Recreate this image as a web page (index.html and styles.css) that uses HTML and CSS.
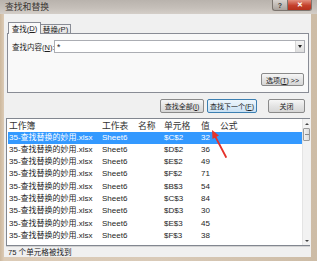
FILE: index.html
```html
<!DOCTYPE html>
<html lang="zh">
<head>
  <meta charset="UTF-8">
  <title>查找和替换</title>
  <link rel="stylesheet" href="styles.css">
</head>
<body>
  <div class="frame">
    <div class="titlebar">
      <span class="title">查找和替换</span>
      <div class="caption">
        <span class="cap-help">?</span>
        <span class="cap-close">✕</span>
      </div>
    </div>

    <div class="client">
      <div class="tabs">
        <div class="tab active">查找(<u>D</u>)</div>
        <div class="tab">替换(<u>P</u>)</div>
      </div>

      <div class="panel">
        <div class="find-row">
          <label>查找内容(<u>N</u>):</label>
          <div class="combo">
            <span class="combo-text">*</span>
            <span class="combo-drop"></span>
          </div>
        </div>
        <div class="options-row">
          <button class="btn btn-options">选项(<u>T</u>) &gt;&gt;</button>
        </div>
      </div>

      <div class="actions">
        <button class="btn btn-all">查找全部(<u>I</u>)</button>
        <button class="btn btn-next">查找下一个(<u>F</u>)</button>
        <button class="btn btn-close">关闭</button>
      </div>

      <div class="results">
        <div class="list">
          <div class="row head">
            <span>工作簿</span><span>工作表</span><span>名称</span><span>单元格</span><span>值</span><span>公式</span>
          </div>
          <div class="row selected"><span>35-查找替换的妙用.xlsx</span><span>Sheet6</span><span></span><span>$C$2</span><span>32</span><span></span></div>
          <div class="row"><span>35-查找替换的妙用.xlsx</span><span>Sheet6</span><span></span><span>$D$2</span><span>36</span><span></span></div>
          <div class="row"><span>35-查找替换的妙用.xlsx</span><span>Sheet6</span><span></span><span>$E$2</span><span>49</span><span></span></div>
          <div class="row"><span>35-查找替换的妙用.xlsx</span><span>Sheet6</span><span></span><span>$F$2</span><span>71</span><span></span></div>
          <div class="row"><span>35-查找替换的妙用.xlsx</span><span>Sheet6</span><span></span><span>$B$3</span><span>54</span><span></span></div>
          <div class="row"><span>35-查找替换的妙用.xlsx</span><span>Sheet6</span><span></span><span>$C$3</span><span>84</span><span></span></div>
          <div class="row"><span>35-查找替换的妙用.xlsx</span><span>Sheet6</span><span></span><span>$D$3</span><span>30</span><span></span></div>
          <div class="row"><span>35-查找替换的妙用.xlsx</span><span>Sheet6</span><span></span><span>$E$3</span><span>45</span><span></span></div>
          <div class="row"><span>35-查找替换的妙用.xlsx</span><span>Sheet6</span><span></span><span>$F$3</span><span>38</span><span></span></div>
        </div>
        <div class="scrollbar">
          <span class="sb-up"></span>
          <span class="sb-thumb"></span>
          <span class="sb-track"></span>
          <span class="sb-down"></span>
        </div>
      </div>

      <div class="status">75 个单元格被找到</div>
    </div>
  </div>

  <svg class="arrow" width="317" height="261" viewBox="0 0 317 261">
    <line x1="226" y1="157" x2="215.5" y2="137" stroke="#e5322b" stroke-width="1.8" stroke-linecap="round"/>
    <polygon points="212,130 219,135.5 212.5,139" fill="#e5322b"/>
  </svg>
</body>
</html>
```

FILE: styles.css
```css
* {
  box-sizing: border-box;
}
body {
  margin: 0;
  width: 317px;
  height: 261px;
  overflow: hidden;
  font-family: "Liberation Sans", "Noto Sans CJK SC", sans-serif;
  font-size: 8.6px;
  color: #1e1e1e;
  background: #d8c7b1;
}
u {
  text-decoration: underline;
}
.frame {
  width: 317px;
  height: 261px;
  display: flex;
  flex-direction: column;
  background: linear-gradient(90deg, #cdb89d 0, #dccbb6 4px, #d9cab8 50%, #cdbca6 100%);
}
.titlebar {
  height: 14px;
  flex: none;
  display: flex;
  align-items: flex-start;
  justify-content: space-between;
  background: linear-gradient(180deg, #b9b3ad 0, #c6c0ba 60%, #d4cec8 100%);
}
.title {
  margin: 2px 0 0 5px;
  font-size: 8.8px;
  line-height: 10px;
  color: #3a3633;
}
.caption {
  display: flex;
  margin-right: 5px;
}
.cap-help, .cap-close {
  height: 11px;
  display: flex;
  align-items: center;
  justify-content: center;
  font-size: 7px;
  font-weight: bold;
  color: #fff;
  border: 1px solid #7c756f;
  border-top: none;
}
.cap-help {
  width: 15px;
  background: linear-gradient(180deg, #d9d4d0, #a9a29c);
  color: #3b3b3b;
  border-radius: 0 0 0 3px;
  border-right: none;
}
.cap-close {
  width: 25px;
  background: linear-gradient(180deg, #e2907f, #c4402c 55%, #b5301c);
  border-radius: 0 0 3px 0;
}
.client {
  flex: none;
  width: 307px;
  height: 243px;
  margin-left: 4px;
  background: #f0f0f0;
  padding: 8px 1px 0 2px;
  display: flex;
  flex-direction: column;
}
.tabs {
  display: flex;
  margin-left: 2px;
  height: 11px;
  align-items: flex-end;
}
.tab {
  height: 9px;
  display: flex;
  align-items: center;
  justify-content: center;
  white-space: nowrap;
  border: 1px solid #898c95;
  border-bottom: none;
  background: linear-gradient(180deg, #f2f2f2, #e3e3e3);
  font-size: 7.6px;
  margin-left: -1px;
}
.tab.active {
  height: 12px;
  width: 33px;
  background: #f9f9f9;
  position: relative;
  z-index: 1;
  margin-bottom: -1px;
  margin-left: 0;
}
.tab:not(.active) {
  width: 31px;
}
.panel {
  width: 302px;
  height: 60px;
  margin-left: 1px;
  border: 1px solid #898c95;
  background: #f9f9f9;
  padding: 6px 3px 0 4px;
}
.find-row {
  display: flex;
  align-items: center;
}
.find-row label {
  width: 42px;
  flex: none;
  font-size: 7.5px;
  white-space: nowrap;
}
.combo {
  flex: 1;
  height: 13px;
  border: 1px solid #abadb3;
  background: #fff;
  display: flex;
  align-items: center;
  justify-content: space-between;
}
.combo-text {
  padding-left: 2px;
  line-height: 10px;
}
.combo-drop {
  width: 9px;
  height: 11px;
  border-left: 1px solid #d6d6d6;
  background: linear-gradient(180deg, #f4f4f4, #dedede);
  position: relative;
}
.combo-drop::after {
  content: "";
  position: absolute;
  left: 2px;
  top: 4px;
  border-left: 2.5px solid transparent;
  border-right: 2.5px solid transparent;
  border-top: 3px solid #222;
}
.options-row {
  display: flex;
  justify-content: flex-end;
  margin-top: 20px;
}
.btn {
  height: 13px;
  padding: 0;
  font-family: inherit;
  font-size: 7px;
  white-space: nowrap;
  color: #222;
  border: 1px solid #8a8a8a;
  border-radius: 2px;
  background: linear-gradient(180deg, #f6f6f6, #e4e4e4 50%, #d6d6d6);
}
.btn-options {
  width: 43px;
  margin-right: 1px;
}
.actions {
  display: flex;
  justify-content: flex-end;
  margin-top: 6px;
  padding-right: 5px;
  height: 14px;
}
.actions .btn {
  height: 14px;
}
.btn-all {
  width: 44px;
}
.btn-next {
  width: 50px;
  margin-left: 3px;
  border-color: #3c7fb1;
  background: linear-gradient(180deg, #eef6fc, #dcecf8 50%, #c7e0f4);
}
.btn-close {
  width: 37px;
  margin-left: 11px;
}
.results {
  margin-top: 5px;
  height: 128px;
  width: 304px;
  border: 1px solid #828790;
  border-right: none;
  background: #fff;
  display: flex;
}
.list {
  flex: 1;
  overflow: hidden;
  padding-left: 1px;
}
.row {
  display: grid;
  grid-template-columns: 93px 36px 26px 37px 19px 1fr;
  height: 12.3px;
  line-height: 12.3px;
  font-size: 8px;
  white-space: nowrap;
}
.row span {
  padding-left: 1px;
  overflow: hidden;
}
.row.head {
  height: 12.5px;
  line-height: 15px;
  font-size: 8.8px;
  color: #333;
}
.row.selected {
  background: #3399ff;
  color: #fff;
}
.scrollbar {
  width: 8px;
  flex: none;
  display: flex;
  flex-direction: column;
  background: #f2f2f2;
  border-left: 1px solid #e4e4e4;
}
.sb-up, .sb-down {
  height: 9px;
  position: relative;
}
.sb-up::after, .sb-down::after {
  content: "";
  position: absolute;
  left: 2px;
  border-left: 2px solid transparent;
  border-right: 2px solid transparent;
}
.sb-up::after {
  top: 4px;
  border-bottom: 2px solid #444;
}
.sb-down::after {
  top: 4px;
  border-top: 2px solid #444;
}
.sb-thumb {
  height: 13px;
  border: 1px solid #9a9a9a;
  border-radius: 1px;
  background: repeating-linear-gradient(180deg, transparent 0, transparent 4px, #8a8a8a 4px, #8a8a8a 5px, transparent 5px, transparent 6px), linear-gradient(90deg, #f1f1f1, #dcdcdc);
  background-size: 4px 11px, 100% 100%;
  background-position: center 1px, 0 0;
  background-repeat: no-repeat;
}
.sb-track {
  flex: 1;
}
.status {
  height: 11px;
  line-height: 11px;
  padding-left: 2px;
  font-size: 7.6px;
  border-top: 1px solid #d2d2d2;
  color: #222;
}
.arrow {
  position: absolute;
  left: 0;
  top: 0;
  pointer-events: none;
}
```
